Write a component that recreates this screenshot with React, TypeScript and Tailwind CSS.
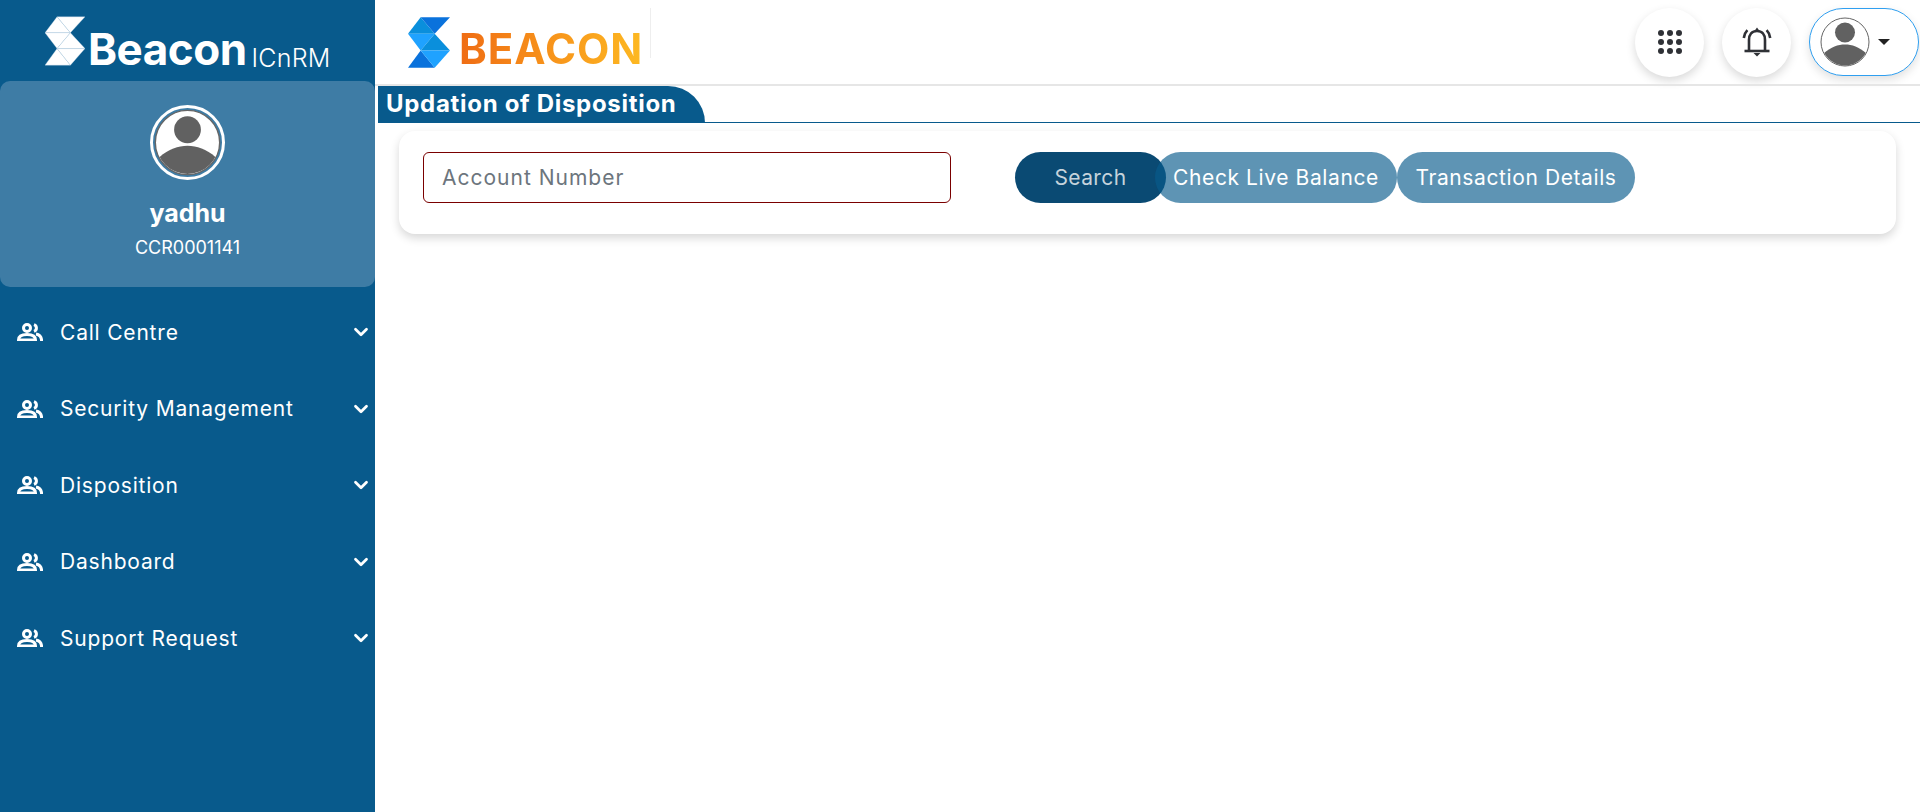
import { ChevronDown } from "lucide-react";

const font = { fontFamily: '"Inter", "Noto Sans", sans-serif' };

function SLogo({ colored, className }: { colored?: boolean; className?: string }) {
  const c = colored
    ? ["#0a8fdc", "#0a72dc", "#1fa2ff", "#0a8fdc", "#0a72dc", "#1fa2ff"]
    : ["#ffffff", "#ffffff", "#ffffff", "#ffffff", "#ffffff", "#ffffff"];
  const s = colored ? "none" : "#b9d3e6";
  return (
    <svg viewBox="27 30 126 152" className={className}>
      <polygon points="65,30 107,80 27,80" fill={c[0]} stroke={s} strokeWidth="1" />
      <polygon points="65,30 153,30 107,80" fill={c[1]} stroke={s} strokeWidth="1" />
      <polygon points="27,80 107,80 65,130" fill={c[2]} stroke={s} strokeWidth="1" />
      <polygon points="107,80 153,130 65,130" fill={c[3]} stroke={s} strokeWidth="1" />
      <polygon points="65,130 107,182 27,182" fill={c[4]} stroke={s} strokeWidth="1" />
      <polygon points="65,130 153,130 107,182" fill={c[5]} stroke={s} strokeWidth="1" />
    </svg>
  );
}

function Avatar({ className }: { className?: string }) {
  return (
    <svg viewBox="0 0 100 100" className={className}>
      <defs>
        <clipPath id="avatar-clip">
          <circle cx="50" cy="50" r="47" />
        </clipPath>
      </defs>
      <circle cx="50" cy="50" r="48" fill="#ffffff" stroke="#666666" strokeWidth="2" />
      <g clipPath="url(#avatar-clip)" fill="#616161">
        <circle cx="50" cy="31" r="20" />
        <path d="M8 72 C22 60 36 55 50 55 C64 55 78 60 92 72 L92 100 L8 100 Z" />
      </g>
    </svg>
  );
}

function PeopleIcon() {
  return (
    <svg viewBox="0 0 26 18" className="w-[26px] h-[18px] shrink-0" fill="none" stroke="#ffffff" strokeWidth="3">
      <circle cx="10" cy="5" r="3.5" />
      <path d="M17 1.6 a3.6 3.6 0 0 1 0 6.8" />
      <path d="M1.5 17 C1.5 13 5 11.5 10 11.5 C15 11.5 18.5 13 18.5 17 Z" />
      <path d="M19 11 C22.5 11.6 24.6 13.6 24.6 18" />
    </svg>
  );
}

function BellIcon() {
  return (
    <svg viewBox="0 0 32 32" className="w-[32px] h-[32px]" fill="none" stroke="#2f3136" strokeWidth="2.6">
      <path d="M8 25 L8 14 C8 8.5 11 5 16 5 C21 5 24 8.5 24 14 L24 25" />
      <path d="M3.5 25 L28.5 25" />
      <path d="M2.8 12 C3.2 8.6 4.4 6.2 6.4 4.2" />
      <path d="M29.2 12 C28.8 8.6 27.6 6.2 25.6 4.2" />
      <path d="M12.5 27 L19.5 27 L16 30.5 Z" fill="#2f3136" stroke="none" />
      <path d="M13.5 5 L16 1.5 L18.5 5 Z" fill="#2f3136" stroke="none" />
    </svg>
  );
}

function GridIcon() {
  const dots = [0, 1, 2].flatMap((r) => [0, 1, 2].map((c) => [r, c]));
  return (
    <svg viewBox="0 0 26 26" className="w-[26px] h-[26px]" fill="#2f3136">
      {dots.map(([r, c]) => (
        <circle key={`${r}-${c}`} cx={4 + c * 9} cy={4 + r * 9} r="3" />
      ))}
    </svg>
  );
}

const nav = ["Call Centre", "Security Management", "Disposition", "Dashboard", "Support Request"];

export default function App() {
  return (
    <div className="flex h-screen w-full bg-white overflow-hidden" style={font}>
      <aside className="w-[375px] shrink-0 bg-[#085a8c] text-white flex flex-col">
        <div className="h-[81px] flex items-start pl-[45px] pt-[16px]">
          <SLogo className="w-[40px] h-[50px] shrink-0" />
          <span className="ml-[3px] mt-[12px] text-[44px] leading-[42px] font-bold tracking-[-0.5px]">Beacon</span>
          <span className="ml-[5px] mt-[28px] text-[25px] leading-[28px] font-light tracking-[0.2px]">ICnRM</span>
        </div>
        <div className="h-[206px] bg-[#3e7ca5] rounded-[10px] flex flex-col items-center pt-[24px]">
          <div className="w-[75px] h-[75px] rounded-full border-[3px] border-white p-[1px] flex items-center justify-center">
            <Avatar className="w-full h-full" />
          </div>
          <div className="mt-[18px] text-[25px] leading-[30px] font-bold">yadhu</div>
          <div className="mt-[8px] text-[18px] leading-[24px]">CCR0001141</div>
        </div>
        <nav className="pt-[7px] flex flex-col">
          {nav.map((n) => (
            <div key={n} className="h-[76.5px] flex items-center pl-[17px] pr-[3px]">
              <PeopleIcon />
              <span className="ml-[17px] text-[21px] tracking-[0.8px] flex-1">{n}</span>
              <ChevronDown size={22} strokeWidth={3} />
            </div>
          ))}
        </nav>
      </aside>
      <main className="flex-1 min-w-0 flex flex-col">
        <header className="h-[86px] shrink-0 flex flex-col">
          <div className="h-[84px] flex items-center pl-[33px] pr-[1px]">
            <SLogo colored className="w-[42px] h-[51px] shrink-0" />
            <span className="ml-[9px] mt-[13px] text-[42px] leading-[44px] font-bold tracking-[1px] bg-gradient-to-r from-[#ef6c14] to-[#fdb922] bg-clip-text text-transparent">
              BEACON
            </span>
            <div className="ml-[7px] w-px h-[50px] bg-[#eeeeee] self-start mt-[8px]" />
            <div className="flex-1" />
            <div className="w-[69px] h-[69px] rounded-full bg-white shadow-[0_4px_10px_rgba(0,0,0,0.15)] flex items-center justify-center">
              <GridIcon />
            </div>
            <div className="ml-[18px] w-[69px] h-[69px] rounded-full bg-white shadow-[0_4px_10px_rgba(0,0,0,0.15)] flex items-center justify-center">
              <BellIcon />
            </div>
            <div className="ml-[18px] w-[110px] h-[68px] rounded-full bg-white border border-[#2f9ff0] shadow-[0_4px_10px_rgba(0,0,0,0.12)] flex items-center pl-[10px]">
              <Avatar className="w-[50px] h-[50px]" />
              <div className="ml-[8px] w-0 h-0 border-x-[6px] border-x-transparent border-t-[6px] border-t-[#222222]" />
            </div>
          </div>
          <div className="h-[2px] bg-[#e6e6e6]" />
        </header>
        <div className="ml-[3px] h-[37px] shrink-0 border-b border-[#085a8c] flex">
          <div className="w-[327px] h-[37px] bg-[#085a8c] rounded-tr-[38px] text-white text-[24px] leading-[36px] font-bold pl-[8px] tracking-[0.7px] whitespace-nowrap">
            Updation of Disposition
          </div>
        </div>
        <section className="ml-[24px] mr-[24px] mt-[8px] h-[103px] rounded-[16px] bg-white shadow-[0_4px_10px_rgba(0,0,0,0.16)] flex items-start pl-[24px] pt-[21px]">
          <input
            placeholder="Account Number"
            className="w-[528px] h-[51px] border border-[#7a0000] rounded-[6px] pl-[18px] text-[21px] tracking-[1px] outline-none placeholder:text-[#6c757d]"
          />
          <button className="ml-[64px] w-[151px] h-[51px] rounded-full bg-[#0a4a73] text-[#c5d3dc] text-[21px] tracking-[0.4px]">Search</button>
          <button className="-ml-[11px] w-[242px] h-[51px] rounded-full bg-[#085a8c]/65 text-white text-[21px] tracking-[0.6px]">Check Live Balance</button>
          <button className="w-[238px] h-[51px] rounded-full bg-[#085a8c]/65 text-white text-[21px] tracking-[0.6px]">Transaction Details</button>
        </section>
      </main>
    </div>
  );
}
